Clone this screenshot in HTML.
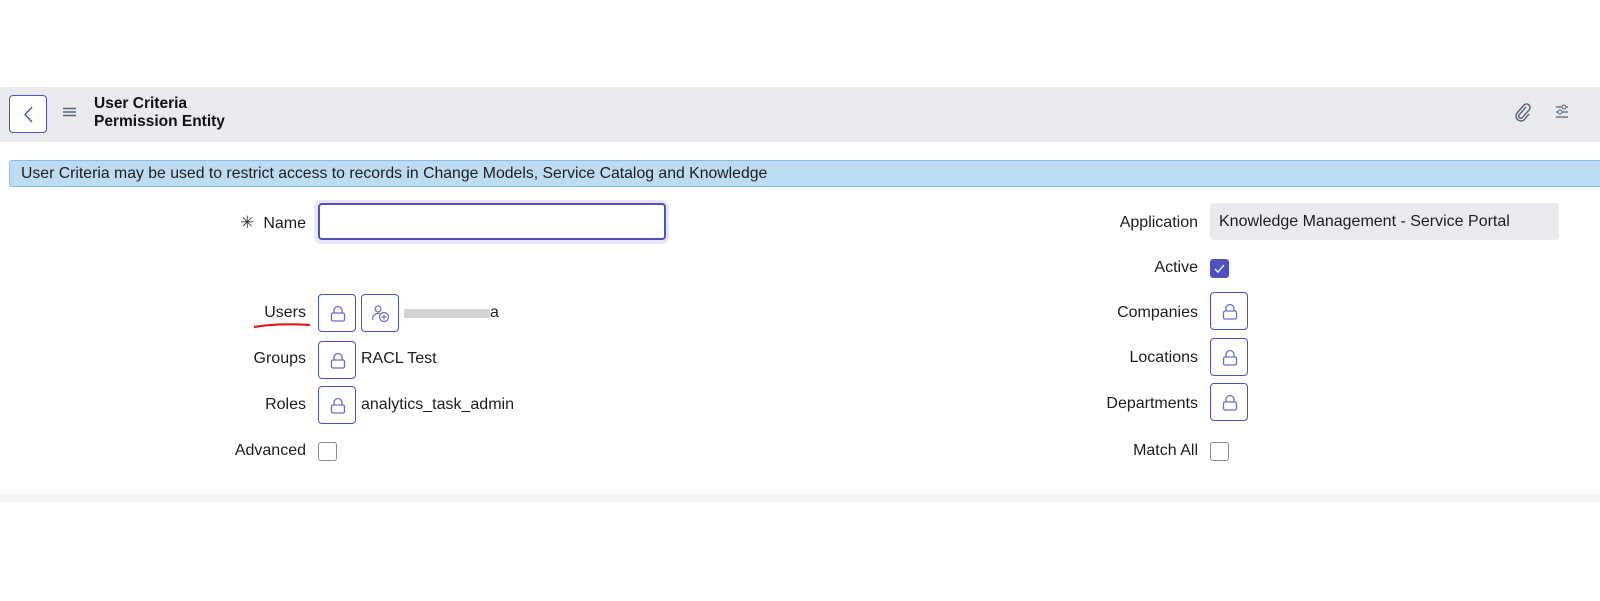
<!DOCTYPE html>
<html><head><meta charset="utf-8"><style>
*{margin:0;padding:0;box-sizing:border-box}
body{width:1600px;height:601px;background:#fff;font-family:"Liberation Sans",sans-serif;color:#1d1d1d;position:relative;overflow:hidden}
.a{position:absolute}
.hdr{left:0;top:87px;width:1600px;height:55px;background:#e9eaee}
.back{left:9px;top:95px;width:38px;height:38px;border:1px solid #4f52bd;border-radius:4px;background:#fff}
.title{left:94px;top:95px;font-size:15.5px;font-weight:bold;line-height:18px;color:#111}
.info{left:9px;top:160px;width:1600px;height:27px;background:#bddcf1;border:1px solid #86bde6;border-radius:3px;font-size:15.8px;line-height:25px;padding-left:11px}
.lbl{font-size:16px;text-align:right;width:200px;line-height:20px}
.btn{width:38px;height:38px;border:1px solid #4f52bd;border-radius:4px;background:#fff}
.btn svg{position:absolute;left:10px;top:10px}
.val{font-size:16px;line-height:20px}
.cb{width:19px;height:19px;border:1px solid #8a8a8a;border-radius:3px;background:#fff}
.band{left:0;top:494px;width:1600px;height:8px;background:#f4f4f5}
</style></head><body>
<div class="a hdr"></div>
<div class="a back"><svg width="38" height="38" viewBox="0 0 38 38"><path d="M22 11 L15 18.5 L22 26" fill="none" stroke="#4f52bd" stroke-width="1.4"/></svg></div>
<svg class="a" style="left:63px;top:107px" width="14" height="10"><path d="M0 1.5H13M0 5H13M0 8.5H13" stroke="#5a5f73" stroke-width="1.4"/></svg>
<div class="a title">User Criteria<br>Permission Entity</div>
<svg class="a" style="left:1513px;top:102px" width="20" height="20" viewBox="0 0 20 20"><path d="M13 5 L6 13 a2.2 2.2 0 0 0 3 3 L16 8 a3.5 3.5 0 0 0 -5 -5 L4 11 a5 5 0 0 0 7 7 L16 12" fill="none" stroke="#5b5f74" stroke-width="1.4"/></svg>
<svg class="a" style="left:1556px;top:104px" width="12" height="16"><path d="M0 3H12M0 8H12M0 13H12" stroke="#5b5f74" stroke-width="1.3"/><circle cx="8" cy="3" r="2" fill="#e9eaee" stroke="#5b5f74"/><circle cx="4" cy="8" r="2" fill="#e9eaee" stroke="#5b5f74"/></svg>
<div class="a info">User Criteria may be used to restrict access to records in Change Models, Service Catalog and Knowledge</div>

<div class="a lbl" style="left:106px;top:213px"><span style="font-size:17px;color:#333">✳</span>&nbsp; Name</div>
<div class="a" style="left:314px;top:200px;width:355px;height:44px;border-radius:7px;background:#e6e7f8"></div>
<div class="a" style="left:318px;top:203px;width:348px;height:37px;border:2px solid #4f52bd;border-radius:4px;background:#fff"></div>

<svg width="0" height="0" style="position:absolute"><defs><g id="lk"><path d="M5 8V5.5a4 4 0 0 1 8 0V8" fill="none" stroke="#6a6dc9" stroke-width="1.3"/><rect x="2.5" y="8" width="13" height="8" rx="1.5" fill="none" stroke="#6a6dc9" stroke-width="1.3"/></g></defs></svg>

<div class="a lbl" style="left:106px;top:303px">Users</div>
<svg class="a" style="left:253px;top:320px" width="60" height="10"><path d="M1 7 Q25 3 57 5" stroke="#e3151c" stroke-width="2.2" fill="none"/></svg>
<div class="a btn" style="left:318px;top:294px"><svg width="18" height="18"><use href="#lk"/></svg></div>
<div class="a btn" style="left:361px;top:294px"><svg width="20" height="18" viewBox="0 0 20 18"><circle cx="6" cy="4" r="3" fill="none" stroke="#6a6dc9" stroke-width="1.2"/><path d="M1 15 a5 5 0 0 1 7 -6" fill="none" stroke="#6a6dc9" stroke-width="1.2"/><circle cx="12" cy="12" r="4.5" fill="none" stroke="#6a6dc9" stroke-width="1.2"/><path d="M12 9.5v5M9.5 12h5" stroke="#6a6dc9" stroke-width="1.2"/></svg></div>
<div class="a" style="left:404px;top:309px;width:86px;height:9px;background:#d4d4d4"></div>
<div class="a val" style="left:490px;top:303px">a</div>

<div class="a lbl" style="left:106px;top:349px">Groups</div>
<div class="a btn" style="left:318px;top:341px"><svg width="18" height="18"><use href="#lk"/></svg></div>
<div class="a val" style="left:361px;top:349px">RACL Test</div>

<div class="a lbl" style="left:106px;top:395px">Roles</div>
<div class="a btn" style="left:318px;top:386px"><svg width="18" height="18"><use href="#lk"/></svg></div>
<div class="a val" style="left:361px;top:395px">analytics_task_admin</div>

<div class="a lbl" style="left:106px;top:441px">Advanced</div>
<div class="a cb" style="left:318px;top:442px"></div>

<div class="a lbl" style="left:998px;top:213px">Application</div>
<div class="a" style="left:1210px;top:203px;width:349px;height:37px;background:#e9eaee;border-radius:4px;font-size:16px;line-height:37px;padding-left:9px">Knowledge Management - Service Portal</div>
<div class="a lbl" style="left:998px;top:258px">Active</div>
<div class="a" style="left:1210px;top:259px;width:19px;height:19px;background:#4f52bd;border-radius:3px"><svg width="19" height="19"><path d="M5 10 L8 13 L14 6" fill="none" stroke="#fff" stroke-width="1.3"/></svg></div>
<div class="a lbl" style="left:998px;top:303px">Companies</div>
<div class="a btn" style="left:1210px;top:292px"><svg width="18" height="18"><use href="#lk"/></svg></div>
<div class="a lbl" style="left:998px;top:348px">Locations</div>
<div class="a btn" style="left:1210px;top:338px"><svg width="18" height="18"><use href="#lk"/></svg></div>
<div class="a lbl" style="left:998px;top:394px">Departments</div>
<div class="a btn" style="left:1210px;top:383px"><svg width="18" height="18"><use href="#lk"/></svg></div>
<div class="a lbl" style="left:998px;top:441px">Match All</div>
<div class="a cb" style="left:1210px;top:442px"></div>

<div class="a band"></div>
</body></html>
